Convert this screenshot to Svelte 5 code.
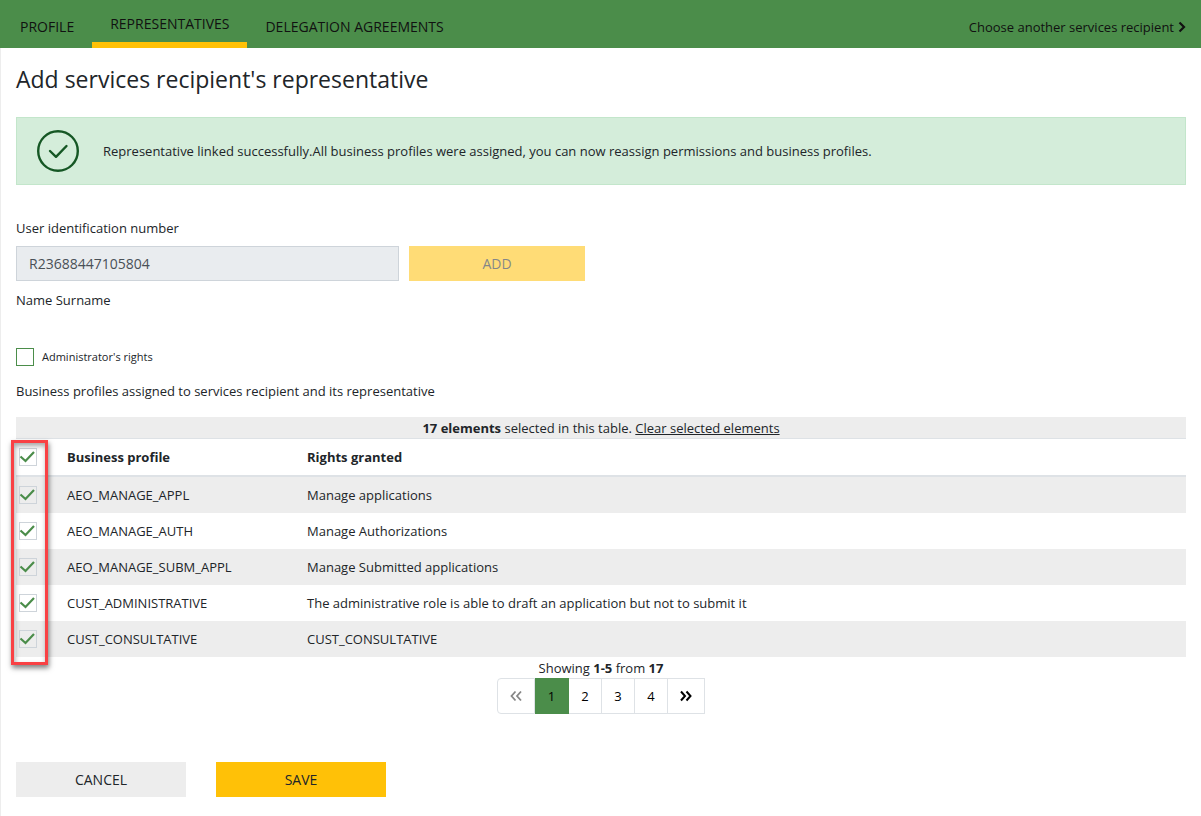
<script lang="ts">
  type Profile = { code: string; rights: string };

  const tabs = ["Profile", "Representatives", "Delegation agreements"];
  const pages = [1, 2, 3, 4];

  const profiles: Profile[] = [
    { code: "AEO_MANAGE_APPL", rights: "Manage applications" },
    { code: "AEO_MANAGE_AUTH", rights: "Manage Authorizations" },
    { code: "AEO_MANAGE_SUBM_APPL", rights: "Manage Submitted applications" },
    {
      code: "CUST_ADMINISTRATIVE",
      rights: "The administrative role is able to draft an application but not to submit it",
    },
    { code: "CUST_CONSULTATIVE", rights: "CUST_CONSULTATIVE" },
  ];

  let activeTab = $state("Representatives");
  let activePage = $state(1);
  let userId = $state("R23688447105804");
  let admin = $state(false);
  let selected = $state(profiles.map(() => true));

  const allSelected = $derived(selected.every(Boolean));

  function setAll(value: boolean) {
    selected = profiles.map(() => value);
  }
</script>

{#snippet tick()}
  <svg class="tick" viewBox="0 0 18 18" aria-hidden="true">
    <path d="M1.5 8.500l5 4.500L15 4" />
  </svg>
{/snippet}

<header class="topbar">
  <nav class="tabs">
    {#each tabs as tab (tab)}
      <button class="tab" class:active={tab === activeTab} onclick={() => (activeTab = tab)}>{tab}</button>
    {/each}
  </nav>
  <a class="switch" href="#recipients">
    Choose another services recipient
    <svg viewBox="0 0 8 12" aria-hidden="true"><path d="M1.500 1.500L6 6l-4.500 4.500" /></svg>
  </a>
</header>

<main class="page">
  <h1>Add services recipient's representative</h1>

  <div class="alert" role="status">
    <svg viewBox="0 0 42 42" aria-hidden="true">
      <circle cx="21" cy="21" r="19.800" />
      <path d="M13 21l6 5.800L29.500 16" />
    </svg>
    <span>Representative linked successfully.All business profiles were assigned, you can now reassign permissions and business profiles.</span>
  </div>

  <label class="field-label" for="user-id">User identification number</label>
  <div class="field-row">
    <input id="user-id" class="text-input" type="text" bind:value={userId} disabled />
    <button class="btn primary" disabled>Add</button>
  </div>
  <p class="person">Name Surname</p>

  <label class="admin">
    <span class="check outlined">
      <input type="checkbox" bind:checked={admin} />
      {@render tick()}
    </span>
    Administrator's rights
  </label>

  <p class="caption">Business profiles assigned to services recipient and its representative</p>

  <div class="selection">
    <strong>17 elements</strong> selected in this table.
    <a href="#clear" onclick={() => setAll(false)}>Clear selected elements</a>
  </div>
  <div class="table-body">
    <table>
      <thead>
        <tr>
          <th class="pick">
            <span class="check">
              <input
                type="checkbox"
                aria-label="Select all"
                checked={allSelected}
                onchange={(e) => setAll(e.currentTarget.checked)}
              />
              {@render tick()}
            </span>
          </th>
          <th class="code">Business profile</th>
          <th>Rights granted</th>
        </tr>
      </thead>
      <tbody>
        {#each profiles as profile, i (profile.code)}
          <tr>
            <td class="pick">
              <span class="check">
                <input type="checkbox" aria-label={profile.code} bind:checked={selected[i]} />
                {@render tick()}
              </span>
            </td>
            <td>{profile.code}</td>
            <td>{profile.rights}</td>
          </tr>
        {/each}
      </tbody>
    </table>
    <div class="highlight"></div>
  </div>

  <p class="showing">Showing <strong>1-5</strong> from <strong>17</strong></p>
  <nav class="pager" aria-label="Pages">
    <button class="arrow" aria-label="Previous" disabled={activePage === 1} onclick={() => activePage--}>
      <svg viewBox="0 0 12 12" aria-hidden="true"><path d="M5.500 1.500L1.500 6l4 4.500M11 1.500L7 6l4 4.500" /></svg>
    </button>
    {#each pages as page (page)}
      <button class:active={page === activePage} onclick={() => (activePage = page)}>{page}</button>
    {/each}
    <button class="arrow" aria-label="Next" disabled={activePage === 4} onclick={() => activePage++}>
      <svg viewBox="0 0 12 12" aria-hidden="true"><path d="M1 1.500L5 6l-4 4.500M6.500 1.500l4 4.500-4 4.500" /></svg>
    </button>
  </nav>

  <div class="actions">
    <button class="btn">Cancel</button>
    <button class="btn primary">Save</button>
  </div>
</main>

<style>
  :global(body) {
    margin: 0;
    background: #fff;
    color: #212529;
    font-family: "Open Sans", "Noto Sans", sans-serif;
    font-size: 13px;
    line-height: 20px;
  }

  :global(#app) {
    display: flex;
    flex-direction: column;
    min-height: 100vh;
  }

  button,
  input {
    font: inherit;
    color: inherit;
    margin: 0;
  }

  button {
    border: none;
    cursor: pointer;
  }

  svg {
    fill: none;
    stroke: currentColor;
  }

  .topbar {
    display: flex;
    justify-content: space-between;
    height: 48px;
    background: #4b8d4a;
    color: #111;
  }

  .tabs {
    display: flex;
    padding-left: 2px;
  }

  .tab {
    padding: 6px 18px 0;
    background: transparent;
    font-size: 14px;
    text-transform: uppercase;
  }

  .tab.active {
    border-bottom: 6px solid #ffc107;
  }

  .switch {
    display: flex;
    align-items: center;
    gap: 4px;
    padding: 6px 15px 0 0;
    color: inherit;
    text-decoration: none;
  }

  .switch svg {
    width: 8px;
    height: 12px;
    stroke-width: 2.2;
  }

  .page {
    flex: 1;
    display: flex;
    flex-direction: column;
    padding: 15px 15px 19px;
    border-left: 1px solid #ededed;
  }

  h1 {
    margin: 0 0 22px;
    font-size: 23px;
    font-weight: 400;
    line-height: 32px;
  }

  .alert {
    display: flex;
    align-items: center;
    gap: 24px;
    padding: 12px 20px;
    border: 1px solid #c3e6cb;
    background: #d4edda;
  }

  .alert svg {
    flex: none;
    width: 42px;
    height: 42px;
    color: #155724;
    stroke-width: 2.4;
    stroke-linecap: round;
    stroke-linejoin: round;
  }

  .field-label {
    margin: 33px 0 8px;
  }

  .field-row {
    display: flex;
    gap: 10px;
    width: 100%;
    max-width: 569px;
  }

  .text-input {
    flex: 1;
    min-width: 0;
    box-sizing: border-box;
    height: 35px;
    padding: 0 12px;
    border: 1px solid #ced4da;
    border-radius: 0;
    background: #e9ecef;
    color: #495057;
    font-size: 14px;
  }

  .btn {
    width: 170px;
    height: 35px;
    padding: 0;
    background: #ededed;
    font-size: 14px;
    text-transform: uppercase;
  }

  .btn.primary {
    background: #ffc107;
  }

  .field-row .btn {
    width: 176px;
  }

  .btn:disabled {
    opacity: 0.55;
  }

  .person {
    margin: 9px 0 37px;
  }

  .admin {
    display: flex;
    align-items: center;
    gap: 8px;
    align-self: flex-start;
    font-size: 11px;
  }

  .check {
    display: grid;
    width: 18px;
    color: #4b8d4a;
  }

  .check input,
  .check .tick {
    grid-area: 1 / 1;
    box-sizing: border-box;
    width: 18px;
    height: 18px;
  }

  .check input {
    appearance: none;
    border: 1px solid #ced4da;
  }

  .outlined input {
    border-color: #4b8d4a;
  }

  .tick {
    visibility: hidden;
    pointer-events: none;
    stroke-width: 2.2;
  }

  .check input:checked + .tick {
    visibility: visible;
  }

  .caption {
    margin: 14px 0 16px;
  }

  .selection {
    padding-top: 1px;
    background: #ededed;
    text-align: center;
  }

  .selection a {
    color: inherit;
  }

  .table-body {
    position: relative;
  }

  table {
    width: 100%;
    border-collapse: separate;
    border-spacing: 0;
    table-layout: fixed;
  }

  th,
  td {
    height: 36px;
    box-sizing: border-box;
    padding: 0 8px;
    text-align: left;
  }

  th {
    height: 39px;
    border-top: 1px solid #dee2e6;
    border-bottom: 2px solid #dee2e6;
  }

  .pick {
    width: 43px;
    padding: 0 3px;
  }

  .code {
    width: 240px;
  }

  tbody tr:nth-child(odd) {
    background: #ededed;
  }

  /* Frame around the checkbox column */
  .highlight {
    position: absolute;
    top: 2px;
    bottom: -8px;
    left: -5px;
    width: 37px;
    box-sizing: border-box;
    border: 3px solid #f94144;
    box-shadow: 1px 3px 5px rgba(0, 0, 0, 0.5), inset 1px 3px 5px rgba(0, 0, 0, 0.35);
    pointer-events: none;
  }

  .showing {
    margin: 1px 0 0;
    text-align: center;
  }

  .pager {
    display: flex;
    align-self: center;
    margin-bottom: 48px;
  }

  .pager button {
    box-sizing: border-box;
    width: 33px;
    height: 36px;
    padding: 0;
    border: 1px solid #dee2e6;
    border-left: none;
    background: #fff;
    color: #000;
  }

  .pager .arrow {
    display: grid;
    place-items: center;
    width: 37px;
  }

  .pager .arrow:first-child {
    width: 38px;
    border-left: 1px solid #dee2e6;
    border-radius: 4px 0 0 4px;
  }

  .pager .arrow svg {
    width: 12px;
    height: 12px;
    stroke-width: 2;
  }

  .pager .arrow:disabled {
    color: #868686;
  }

  .pager .arrow:disabled svg {
    stroke-width: 1.8;
  }

  .pager .active {
    width: 34px;
    border-color: #4b8d4a;
    background: #4b8d4a;
  }

  .actions {
    display: flex;
    gap: 30px;
  }
</style>
